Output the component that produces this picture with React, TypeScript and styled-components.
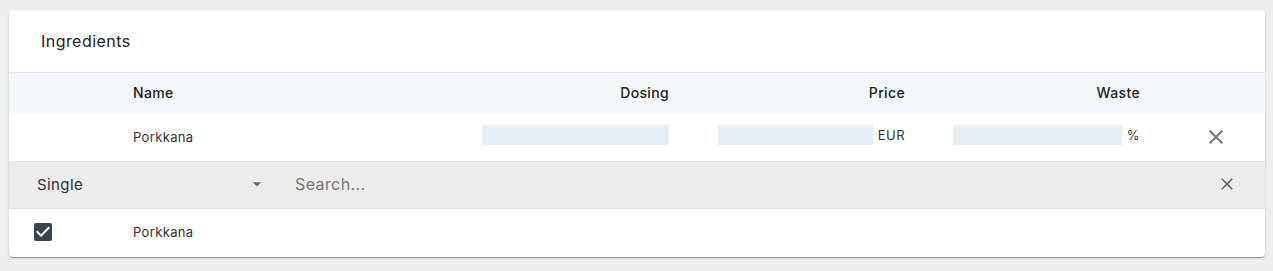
import React from "react";
import styled, { createGlobalStyle } from "styled-components";

const Global = createGlobalStyle`
  html, body { margin: 0; padding: 0; }
  body {
    background: #eeeeee;
    font-family: Inter, "DejaVu Sans", sans-serif;
    padding: 10px 8px 14px 9px;
  }
  * { box-sizing: border-box; }
`;

const Card = styled.div`
  background: #ffffff;
  border-radius: 4px;
  box-shadow: 0 2px 1px -1px rgba(0,0,0,0.2), 0 1px 1px 0 rgba(0,0,0,0.14), 0 1px 3px 0 rgba(0,0,0,0.12);
  overflow: hidden;
`;

const Title = styled.div`
  height: 63px;
  padding-left: 32px;
  padding-bottom: 1px;
  display: flex;
  align-items: center;
  font-size: 16px;
  letter-spacing: 0.45px;
  color: #222;
  border-bottom: 1px solid #e3e3e3;
`;

const Row = styled.div<{ $head?: boolean }>`
  display: grid;
  grid-template-columns: 108px 349px 219px 236px 235px 1fr;
  align-items: center;
  height: ${(p) => (p.$head ? "40px" : "49px")};
  padding-bottom: ${(p) => (p.$head ? "1px" : "1px")};
  background: ${(p) => (p.$head ? "#f3f8f8" : "#ffffff")};
  border-bottom: ${(p) => (p.$head ? "none" : "1px solid #e3e3e3")};
  font-size: ${(p) => (p.$head ? "14px" : "13px")};
  font-weight: ${(p) => (p.$head ? 500 : 400)};
  letter-spacing: 0.35px;
  color: ${(p) => (p.$head ? "#222" : "#333")};
`;

const Cell = styled.div<{ $right?: boolean }>`
  padding: 0 16px;
  display: flex;
  align-items: center;
  justify-content: ${(p) => (p.$right ? "flex-end" : "flex-start")};
`;

const ActionCell = styled.div`
  padding-left: 48px;
  display: flex;
  align-items: center;
`;

const Field = styled.div`
  width: 187px;
  display: flex;
  align-items: center;
  gap: 5px;
  margin-bottom: 3px;
`;

const Input = styled.div`
  flex: 1;
  height: 20px;
  background: #e5eff5;
`;

const Unit = styled.span`
  font-size: 13px;
  letter-spacing: 0.5px;
  color: #333;
`;

const Toolbar = styled.div`
  height: 47px;
  padding-bottom: 2px;
  background: #ebebeb;
  border-bottom: 1px solid #dedede;
  display: flex;
  align-items: center;
  padding-left: 28px;
  padding-right: 28px;
`;

const Select = styled.div`
  width: 230px;
  display: flex;
  align-items: center;
  justify-content: space-between;
  font-size: 15px;
  letter-spacing: 0.4px;
  color: #333;
`;

const Search = styled.div`
  flex: 1;
  margin-left: 28px;
  font-size: 16px;
  letter-spacing: 0.4px;
  color: #777;
`;

const Result = styled.div`
  height: 48px;
  padding-bottom: 2px;
  display: grid;
  grid-template-columns: 108px 1fr;
  align-items: center;
  font-size: 13px;
  letter-spacing: 0.35px;
  color: #333;
`;

const CheckCell = styled.div`
  padding-left: 22px;
  display: flex;
  align-items: center;
`;

const Icon = styled.svg<{ $c: string }>`
  fill: ${(p) => p.$c};
  display: block;
`;

const closePath =
  "M19 6.41 17.59 5 12 10.59 6.41 5 5 6.41 10.59 12 5 17.59 6.41 19 12 13.41 17.59 19 19 17.59 13.41 12z";

export default function App() {
  return (
    <>
      <Global />
      <Card>
        <Title>Ingredients</Title>
        <Row $head>
          <Cell />
          <Cell>Name</Cell>
          <Cell $right>Dosing</Cell>
          <Cell $right>Price</Cell>
          <Cell $right>Waste</Cell>
          <Cell />
        </Row>
        <Row>
          <Cell />
          <Cell>Porkkana</Cell>
          <Cell $right>
            <Field>
              <Input />
            </Field>
          </Cell>
          <Cell $right>
            <Field>
              <Input />
              <Unit>EUR</Unit>
            </Field>
          </Cell>
          <Cell $right>
            <Field>
              <Input />
              <Unit>%</Unit>
            </Field>
          </Cell>
          <ActionCell>
            <Icon $c="#757575" width="24" height="24" viewBox="0 0 24 24">
              <path d={closePath} />
            </Icon>
          </ActionCell>
        </Row>
        <Toolbar>
          <Select>
            <span>Single</span>
            <Icon $c="#666" width="20" height="20" viewBox="0 0 24 24">
              <path d="M7 10l5 5 5-5z" />
            </Icon>
          </Select>
          <Search>Search...</Search>
          <Icon $c="#666" width="20" height="20" viewBox="0 0 24 24">
            <path d={closePath} />
          </Icon>
        </Toolbar>
        <Result>
          <CheckCell>
            <Icon $c="#37474f" width="24" height="24" viewBox="0 0 24 24">
              <path d="M19 3H5c-1.11 0-2 .9-2 2v14c0 1.1.89 2 2 2h14c1.11 0 2-.9 2-2V5c0-1.1-.89-2-2-2zm-9 14l-5-5 1.41-1.41L10 14.17l7.59-7.59L19 8l-9 9z" />
            </Icon>
          </CheckCell>
          <Cell>Porkkana</Cell>
        </Result>
      </Card>
    </>
  );
}
